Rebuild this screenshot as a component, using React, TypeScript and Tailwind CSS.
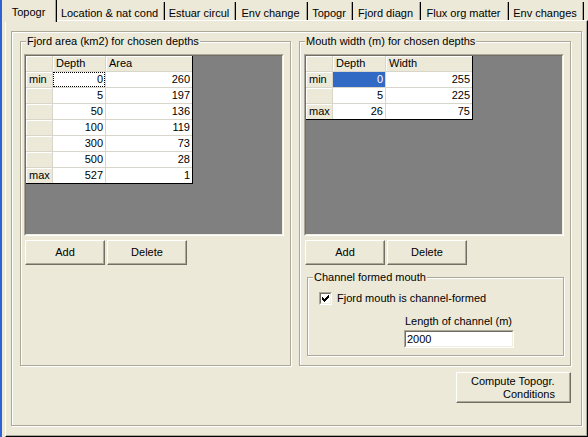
import clsx from "clsx";
import type { ReactNode } from "react";

type GridRow = [string, string, string];

const fjordRows: GridRow[] = [
  ["min", "0", "260"],
  ["", "5", "197"],
  ["", "50", "136"],
  ["", "100", "119"],
  ["", "300", "73"],
  ["", "500", "28"],
  ["max", "527", "1"]
];

const mouthRows: GridRow[] = [
  ["min", "0", "255"],
  ["", "5", "225"],
  ["max", "26", "75"]
];

const tabs = [
  { label: "Topogr", width: "w-[54px]", active: true },
  { label: "Location & nat cond", width: "w-[108px]" },
  { label: "Estuar circul", width: "w-[71px]" },
  { label: "Env change", width: "w-[72px]" },
  { label: "Topogr", width: "w-[45px]" },
  { label: "Fjord diagn", width: "w-[68px]" },
  { label: "Flux org matter", width: "w-[88px]" },
  { label: "Env changes", width: "w-[75px]" }
];

export default function App() {
  return (
    <div className="flex h-[437px] w-[588px] overflow-hidden bg-[#ECE9D8] font-['Liberation_Sans',Arial,sans-serif] text-[11px] leading-[13px] text-black">
      <div className="w-[2px] shrink-0 bg-[#2C62D4]" />
      <div className="flex flex-col">
        <div className="ml-[1px] flex h-[20px] items-start">
          {tabs.map((tab, i) => (
            <div
              key={i}
              className={clsx(
                "flex justify-center border-r border-black pr-[2px] shadow-[inset_-1px_0_0_#ACA899]",
                tab.width,
                tab.active
                  ? "relative z-10 h-[22px] bg-[#ECE9D8] pt-[6px]"
                  : "mt-[2px] h-[18px] pt-[5px]"
              )}
            >
              <span className="whitespace-nowrap">{tab.label}</span>
            </div>
          ))}
        </div>

        <div className="ml-[3px] h-[417px] w-[583px] border border-t-white border-l-white border-r-black border-b-black pl-[5px] pt-[10px] shadow-[inset_-1px_-1px_0_#ACA899]">
          <div className="flex h-[395px] w-[571px] flex-col border border-[#ACA899] pl-[8px] pt-[9px] shadow-[1px_1px_0_#fff,inset_1px_1px_0_#fff]">
            <div className="flex gap-[8px]">
              <GroupBox label="Fjord area (km2) for chosen depths" className="h-[325px] w-[271px] pl-[3px] pt-[12px]">
                <DataGrid header="Area" rows={fjordRows} focusRow={0} />
                <div className="ml-[1px] mt-[4px] flex gap-[2px]">
                  <Button className="h-[25px] w-[80px]">Add</Button>
                  <Button className="h-[25px] w-[80px]">Delete</Button>
                </div>
              </GroupBox>

              <GroupBox label="Mouth width (m) for chosen depths" className="h-[325px] w-[272px] pl-[4px] pt-[12px]">
                <DataGrid header="Width" rows={mouthRows} selectedRow={0} />
                <div className="ml-[1px] mt-[4px] flex gap-[2px]">
                  <Button className="h-[25px] w-[80px]">Add</Button>
                  <Button className="h-[25px] w-[80px]">Delete</Button>
                </div>
                <GroupBox label="Channel formed mouth" className="ml-[3px] mt-[12px] h-[79px] w-[257px] pl-[11px] pt-[14px]">
                  <div className="flex items-center gap-[5px]">
                    <CheckBox />
                    <span>Fjord mouth is channel-formed</span>
                  </div>
                  <div className="ml-[85px] mt-[10px]">
                    <div className="pl-[1px]">Length of channel (m)</div>
                    <Edit value="2000" className="mt-[2px] h-[18px] w-[110px]" />
                  </div>
                </GroupBox>
              </GroupBox>
            </div>

            <Button className="ml-auto mr-[10px] mt-[6px] h-[31px] w-[115px] !items-start !justify-start pt-[2px]">
              <div className="flex flex-col">
                <span className="ml-[14px] whitespace-nowrap">Compute Topogr.</span>
                <span className="ml-[46px] whitespace-nowrap">Conditions</span>
              </div>
            </Button>
          </div>
        </div>
      </div>
    </div>
  );
}

type GroupBoxProps = {
  label: string;
  className?: string;
  children: ReactNode;
};

function GroupBox({ label, className, children }: GroupBoxProps) {
  return (
    <div
      className={clsx(
        "relative shrink-0 border border-[#ACA899] shadow-[1px_1px_0_#fff,inset_1px_1px_0_#fff]",
        className
      )}
    >
      <span className="absolute left-[5px] top-[-7px] whitespace-nowrap bg-[#ECE9D8] px-[1px]">
        {label}
      </span>
      {children}
    </div>
  );
}

type DataGridProps = {
  header: string;
  rows: GridRow[];
  focusRow?: number;
  selectedRow?: number;
};

function DataGrid({ header, rows, focusRow, selectedRow }: DataGridProps) {
  return (
    <div className="h-[182px] w-[260px] border border-t-[#ACA899] border-l-[#ACA899] border-r-white border-b-white">
      <div className="h-full w-full border border-t-[#716F64] border-l-[#716F64] border-r-[#F1EFE2] border-b-[#F1EFE2] bg-[#808080]">
        <div className="grid w-fit grid-cols-[26px_52px_86px] gap-px border-b border-r border-black bg-[#D8D5CA]">
          <FixedCell />
          <FixedCell className="pl-[3px]">Depth</FixedCell>
          <FixedCell className="pl-[3px]">{header}</FixedCell>
          {rows.map((row, i) => (
            <RowCells
              key={i}
              row={row}
              focused={focusRow === i}
              selected={selectedRow === i}
            />
          ))}
        </div>
      </div>
    </div>
  );
}

function RowCells({ row, focused, selected }: { row: GridRow; focused: boolean; selected: boolean }) {
  return (
    <>
      <FixedCell className="pl-[3px]">{row[0]}</FixedCell>
      <div
        className={clsx(
          "h-[15px] pr-[2px] text-right leading-[15px]",
          selected ? "bg-[#316AC5] text-white" : "bg-white",
          focused && "outline-1 -outline-offset-1 outline-dotted outline-black"
        )}
      >
        {row[1]}
      </div>
      <div className="h-[15px] bg-white pr-[2px] text-right leading-[15px]">{row[2]}</div>
    </>
  );
}

function FixedCell({ children, className }: { children?: ReactNode; className?: string }) {
  return (
    <div
      className={clsx(
        "h-[15px] bg-[#ECE9D8] leading-[15px] shadow-[inset_1px_1px_0_#fff]",
        className
      )}
    >
      {children}
    </div>
  );
}

function Button({ children, className }: { children: ReactNode; className?: string }) {
  return (
    <div
      className={clsx(
        "flex items-center justify-center border border-t-white border-l-white border-r-[#716F64] border-b-[#716F64] bg-[#ECE9D8] shadow-[inset_-1px_-1px_0_#ACA899]",
        className
      )}
    >
      {children}
    </div>
  );
}

function CheckBox() {
  return (
    <div className="h-[13px] w-[13px] shrink-0 border border-t-[#ACA899] border-l-[#ACA899] border-r-white border-b-white">
      <div className="h-full w-full border border-t-[#716F64] border-l-[#716F64] border-r-[#F1EFE2] border-b-[#F1EFE2] bg-white">
        <svg width="7" height="7" viewBox="0 0 7 7" className="m-px" shapeRendering="crispEdges">
          <rect x="6" y="0" width="1" height="1" />
          <rect x="5" y="1" width="2" height="1" />
          <rect x="0" y="2" width="1" height="1" />
          <rect x="4" y="2" width="3" height="1" />
          <rect x="0" y="3" width="2" height="1" />
          <rect x="3" y="3" width="3" height="1" />
          <rect x="0" y="4" width="5" height="1" />
          <rect x="1" y="5" width="3" height="1" />
          <rect x="2" y="6" width="1" height="1" />
        </svg>
      </div>
    </div>
  );
}

function Edit({ value, className }: { value: string; className?: string }) {
  return (
    <div
      className={clsx(
        "border border-t-[#ACA899] border-l-[#ACA899] border-r-white border-b-white",
        className
      )}
    >
      <div className="h-full w-full border border-t-[#716F64] border-l-[#716F64] border-r-[#F1EFE2] border-b-[#F1EFE2] bg-white pl-[1px] leading-[14px]">
        {value}
      </div>
    </div>
  );
}
